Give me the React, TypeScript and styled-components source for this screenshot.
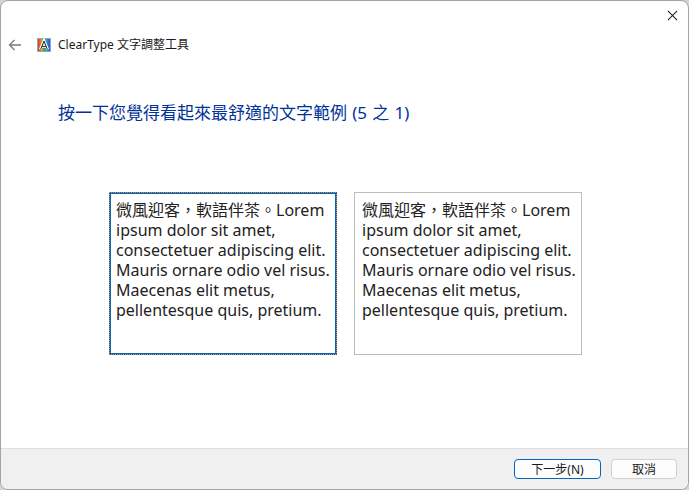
import React from "react"
import styled, { createGlobalStyle } from "styled-components"

const FONT = `"Noto Sans", "Noto Sans CJK TC", sans-serif`
const SAMPLE = "微風迎客\uFF0C軟語伴茶。Lorem ipsum dolor sit amet, consectetuer adipiscing elit. Mauris ornare odio vel risus. Maecenas elit metus, pellentesque quis, pretium."

const Global = createGlobalStyle`
  html, body { margin: 0; padding: 0; background: #d4d4d4; }
`

const App = () => {
  return (
    <>
      <Global />
      <Window lang="zh-TW">
        <TitleRow>
          <CloseIcon viewBox="0 0 12 12">
            <path d="M1 1 L11 11 M11 1 L1 11" stroke="#1a1a1a" strokeWidth="1.1" fill="none" />
          </CloseIcon>
        </TitleRow>
        <NavRow>
          <BackIcon viewBox="0 0 14 12">
            <path d="M13 6 H1.5 M6.5 1 L1.5 6 L6.5 11" stroke="#7a7a7a" strokeWidth="1.3" fill="none" />
          </BackIcon>
          <AppIcon viewBox="0 0 14 14">
            <defs>
              <linearGradient id="tile" x1="0" y1="0" x2="1" y2="0">
                <stop offset="0" stopColor="#e0352b" />
                <stop offset="0.3" stopColor="#d8a020" />
                <stop offset="0.5" stopColor="#2fb24a" />
                <stop offset="0.7" stopColor="#2aa0c8" />
                <stop offset="1" stopColor="#2f4fd8" />
              </linearGradient>
            </defs>
            <rect x="0" y="0" width="14" height="14" fill="#9aa3c4" />
            <rect x="1" y="1" width="12" height="12" fill="url(#tile)" />
            <path d="M3.2 11.5 L7 2.5 L10.8 11.5 M4.6 8.6 H9.4" stroke="#fff" strokeWidth="2.6" fill="none" />
            <path d="M3.6 11.5 L7 3 L10.4 11.5 M5 8.6 H9" stroke="#222" strokeWidth="1" fill="none" />
          </AppIcon>
          <AppTitle>ClearType 文字調整工具</AppTitle>
        </NavRow>
        <Content>
          <Heading>按一下您覺得看起來最舒適的文字範例 (5 之 1)</Heading>
          <Samples>
            <Sample $selected>{SAMPLE}</Sample>
            <Sample>{SAMPLE}</Sample>
          </Samples>
        </Content>
        <Footer>
          <FooterButton $primary>下一步(N)</FooterButton>
          <FooterButton $width={66}>取消</FooterButton>
        </Footer>
      </Window>
    </>
  )
}
export default App

const Window = styled.div`
  width: 689px;
  height: 490px;
  box-sizing: border-box;
  display: flex;
  flex-direction: column;
  overflow: hidden;
  background: #ffffff;
  border: 1px solid #a3a3a3;
  border-radius: 8px;
  font-family: ${FONT};
`
const TitleRow = styled.div`
  height: 29px;
  flex-shrink: 0;
  display: flex;
  justify-content: flex-end;
  align-items: center;
  padding: 0 10px 0 0;
`
const CloseIcon = styled.svg`
  width: 11px;
  height: 11px;
`
const NavRow = styled.div`
  height: 30px;
  flex-shrink: 0;
  display: flex;
  align-items: center;
  padding-left: 7px;
`
const BackIcon = styled.svg`
  width: 14px;
  height: 12px;
  margin-right: 15px;
`
const AppIcon = styled.svg`
  width: 14px;
  height: 14px;
  margin-right: 7px;
`
const AppTitle = styled.div`
  font-size: 12px;
  line-height: 16px;
  color: #1a1a1a;
`
const Content = styled.div`
  flex: 1;
  display: flex;
  flex-direction: column;
  padding-left: 57px;
`
const Heading = styled.div`
  margin-top: 40px;
  font-size: 17px;
  line-height: 26px;
  color: #003399;
  word-spacing: 0.8px;
`
const Samples = styled.div`
  display: flex;
  gap: 17px;
  margin-top: 66px;
  margin-left: 51px;
`
const DOTS_X = "repeating-linear-gradient(90deg, #e8862a 0 1px, #0067c0 1px 2px)"
const DOTS_Y = "repeating-linear-gradient(180deg, #e8862a 0 1px, #0067c0 1px 2px)"
const Sample = styled.div<{ $selected?: boolean }>`
  width: 228px;
  height: 163px;
  box-sizing: border-box;
  padding: ${(p) => (p.$selected ? "7px 3px 6px 6px" : "7px 3px 6px 7px")};
  border: ${(p) => (p.$selected ? "1px solid transparent" : "1px solid #bcbcbc")};
  background: #ffffff;
  ${(p) => p.$selected && `
    background:
      ${DOTS_X} top / 100% 1px no-repeat border-box,
      ${DOTS_X} bottom / 100% 1px no-repeat border-box,
      ${DOTS_Y} left / 1px 100% no-repeat border-box,
      ${DOTS_Y} right / 1px 100% no-repeat border-box,
      #ffffff;
    box-shadow: inset 0 0 0 1px #0067c0;
  `}
  font-size: 16px;
  line-height: 20px;
  color: #222222;
`
const Footer = styled.div`
  height: 41px;
  flex-shrink: 0;
  box-sizing: border-box;
  display: flex;
  justify-content: flex-end;
  align-items: center;
  gap: 10px;
  padding-right: 11px;
  background: #f0f0f0;
  border-top: 1px solid #dfdfdf;
`
const FooterButton = styled.div<{ $primary?: boolean; $width?: number }>`
  width: ${(p) => p.$width ?? 87}px;
  height: 20px;
  box-sizing: border-box;
  display: flex;
  justify-content: center;
  align-items: center;
  font-size: 12px;
  color: #1a1a1a;
  background: #fdfdfd;
  border-radius: 4px;
  border: ${(p) => (p.$primary ? "1px solid #0067c0" : "1px solid #d0d0d0")};
`
